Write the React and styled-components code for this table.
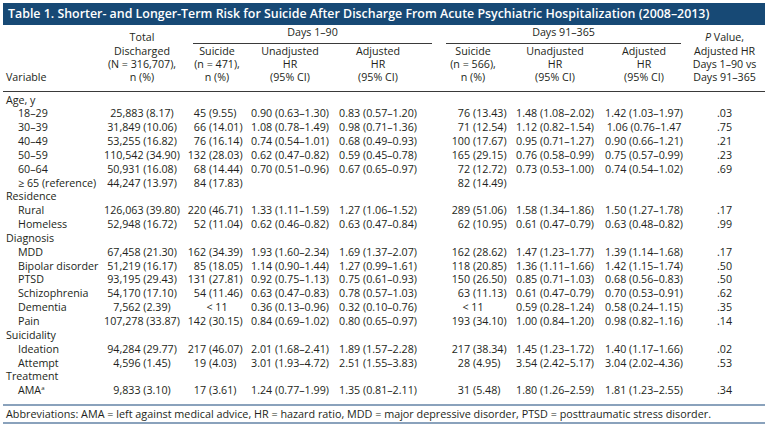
import React from 'react';
import styled, { createGlobalStyle } from 'styled-components';

const GlobalStyle = createGlobalStyle`
  * { box-sizing: border-box; }
  body {
    margin: 0;
    background: #fff;
  }
`;

const Page = styled.div`
  width: 768px;
  height: 425px;
  padding: 3px 3px 0;
  overflow: hidden;
  font-family: "Open Sans", "Noto Sans", sans-serif;
  color: #231f20;
`;

const TitleBar = styled.div`
  height: 22px;
  line-height: 22px;
  padding-left: 5px;
  background: #174975;
  color: #fff;
  font-size: 12.4px;
  font-weight: 600;
  white-space: nowrap;
`;

const Table = styled.table`
  width: 100%;
  table-layout: fixed;
  border-collapse: collapse;
  font-size: 10.7px;
`;

const Head = styled.thead`
  border-bottom: 1px solid #3a3a3a;
`;

const GroupRow = styled.tr`
  height: 19px;
`;

const LabelRow = styled.tr`
  height: 47px;
`;

const Th = styled.th`
  padding: 0 0 6px;
  font-weight: 400;
  line-height: 13.3px;
  text-align: ${(p) => (p.$left ? 'left' : 'center')};
  padding-left: ${(p) => (p.$left ? '3px' : '0')};
  vertical-align: bottom;
  white-space: nowrap;
`;

const GroupTh = styled.th`
  padding: 1px 0 0;
  font-weight: 400;
  vertical-align: top;
`;

const GroupLabel = styled.div`
  margin: ${(p) => p.$margin};
  padding-bottom: 5px;
  line-height: 12px;
  border-bottom: 1px solid #3a3a3a;
  text-align: center;
`;

const Body = styled.tbody`
  &::before {
    content: '';
    display: block;
    height: 2px;
  }
`;

const Row = styled.tr`
  height: 13.85px;
`;

const Td = styled.td`
  padding: 0;
  line-height: 13.85px;
  white-space: nowrap;
  text-align: center;
`;

const LabelTd = styled(Td)`
  text-align: left;
  padding-left: ${(p) => (p.$sub ? '15px' : '3px')};
`;

const Split = styled.span`
  display: flex;
`;

const Num = styled.span`
  flex: none;
  width: ${(p) => p.$w}px;
  text-align: right;
`;

const Pct = styled.span`
  flex: none;
  padding-left: 3px;
  text-align: left;
`;

const Footer = styled.div`
  margin-top: 6px;
  padding-left: 3px;
  border-top: 2px solid #8aa2bc;
  border-bottom: 2px solid #8aa2bc;
  font-size: 10.8px;
  line-height: 16px;
  white-space: nowrap;
`;

const Sup = styled.sup`
  font-size: 6px;
  vertical-align: 4px;
  line-height: 0;
`;

const Italic = styled.i`
  font-style: italic;
`;

const rows = [
  { cat: 'Age, y' },
  ['18–29', '25,883 (8.17)', '45 (9.55)', '0.90 (0.63–1.30)', '0.83 (0.57–1.20)', '76 (13.43)', '1.48 (1.08–2.02)', '1.42 (1.03–1.97)', '.03'],
  ['30–39', '31,849 (10.06)', '66 (14.01)', '1.08 (0.78–1.49)', '0.98 (0.71–1.36)', '71 (12.54)', '1.12 (0.82–1.54)', '1.06 (0.76–1.47', '.75'],
  ['40–49', '53,255 (16.82)', '76 (16.14)', '0.74 (0.54–1.01)', '0.68 (0.49–0.93)', '100 (17.67)', '0.95 (0.71–1.27)', '0.90 (0.66–1.21)', '.21'],
  ['50–59', '110,542 (34.90)', '132 (28.03)', '0.62 (0.47–0.82)', '0.59 (0.45–0.78)', '165 (29.15)', '0.76 (0.58–0.99)', '0.75 (0.57–0.99)', '.23'],
  ['60–64', '50,931 (16.08)', '68 (14.44)', '0.70 (0.51–0.96)', '0.67 (0.65–0.97)', '72 (12.72)', '0.73 (0.53–1.00)', '0.74 (0.54–1.02)', '.69'],
  ['≥ 65 (reference)', '44,247 (13.97)', '84 (17.83)', '', '', '82 (14.49)', '', '', ''],
  { cat: 'Residence' },
  ['Rural', '126,063 (39.80)', '220 (46.71)', '1.33 (1.11–1.59)', '1.27 (1.06–1.52)', '289 (51.06)', '1.58 (1.34–1.86)', '1.50 (1.27–1.78)', '.17'],
  ['Homeless', '52,948 (16.72)', '52 (11.04)', '0.62 (0.46–0.82)', '0.63 (0.47–0.84)', '62 (10.95)', '0.61 (0.47–0.79)', '0.63 (0.48–0.82)', '.99'],
  { cat: 'Diagnosis' },
  ['MDD', '67,458 (21.30)', '162 (34.39)', '1.93 (1.60–2.34)', '1.69 (1.37–2.07)', '162 (28.62)', '1.47 (1.23–1.77)', '1.39 (1.14–1.68)', '.17'],
  ['Bipolar disorder', '51,219 (16.17)', '85 (18.05)', '1.14 (0.90–1.44)', '1.27 (0.99–1.61)', '118 (20.85)', '1.36 (1.11–1.66)', '1.42 (1.15–1.74)', '.50'],
  ['PTSD', '93,195 (29.43)', '131 (27.81)', '0.92 (0.75–1.13)', '0.75 (0.61–0.93)', '150 (26.50)', '0.85 (0.71–1.03)', '0.68 (0.56–0.83)', '.50'],
  ['Schizophrenia', '54,170 (17.10)', '54 (11.46)', '0.63 (0.47–0.83)', '0.78 (0.57–1.03)', '63 (11.13)', '0.61 (0.47–0.79)', '0.70 (0.53–0.91)', '.62'],
  ['Dementia', '7,562 (2.39)', '< 11', '0.36 (0.13–0.96)', '0.32 (0.10–0.76)', '< 11', '0.59 (0.28–1.24)', '0.58 (0.24–1.15)', '.35'],
  ['Pain', '107,278 (33.87)', '142 (30.15)', '0.84 (0.69–1.02)', '0.80 (0.65–0.97)', '193 (34.10)', '1.00 (0.84–1.20)', '0.98 (0.82–1.16)', '.14'],
  { cat: 'Suicidality' },
  ['Ideation', '94,284 (29.77)', '217 (46.07)', '2.01 (1.68–2.41)', '1.89 (1.57–2.28)', '217 (38.34)', '1.45 (1.23–1.72)', '1.40 (1.17–1.66)', '.02'],
  ['Attempt', '4,596 (1.45)', '19 (4.03)', '3.01 (1.93–4.72)', '2.51 (1.55–3.83)', '28 (4.95)', '3.54 (2.42–5.17)', '3.04 (2.02–4.36)', '.53'],
  { cat: 'Treatment' },
  [<>AMA<Sup>a</Sup></>, '9,833 (3.10)', '17 (3.61)', '1.24 (0.77–1.99)', '1.35 (0.81–2.11)', '31 (5.48)', '1.80 (1.26–2.59)', '1.81 (1.23–2.55)', '.34'],
];

// column widths, left to right; the 6th is the gap between the two day groups
const widths = [97, 84, 66, 80, 96, 14, 66, 98, 80, 81];

function Count({ value, w }) {
  if (!value.includes(' (')) return value;
  const [n, rest] = value.split(' (');
  return (
    <Split>
      <Num $w={w}>{n}</Num>
      <Pct>({rest}</Pct>
    </Split>
  );
}

function DataRow({ cells }) {
  const [label, total, s1, u1, a1, s2, u2, a2, p] = cells;
  return (
    <Row>
      <LabelTd $sub>{label}</LabelTd>
      <Td>{total}</Td>
      <Td><Count value={s1} w={22} /></Td>
      <Td>{u1}</Td>
      <Td>{a1}</Td>
      <Td />
      <Td><Count value={s2} w={30} /></Td>
      <Td>{u2}</Td>
      <Td>{a2}</Td>
      <Td>{p}</Td>
    </Row>
  );
}

export default function App() {
  return (
    <Page>
      <GlobalStyle />
      <TitleBar>
        Table 1. Shorter- and Longer-Term Risk for Suicide After Discharge From Acute Psychiatric Hospitalization (2008–2013)
      </TitleBar>
      <Table>
        <colgroup>
          {widths.map((w, i) => (
            <col key={i} style={{ width: w }} />
          ))}
        </colgroup>
        <Head>
          <GroupRow>
            <Th rowSpan={2} $left>Variable</Th>
            <Th rowSpan={2}>
              Total
              <br />
              Discharged
              <br />
              (N = 316,707),
              <br />
              n (%)
            </Th>
            <GroupTh colSpan={4}>
              <GroupLabel $margin="0 8px 0 9px">Days 1–90</GroupLabel>
            </GroupTh>
            <GroupTh colSpan={3}>
              <GroupLabel $margin="0 3px 0 6px">Days 91–365</GroupLabel>
            </GroupTh>
            <Th rowSpan={2}>
              <Italic>P</Italic> Value,
              <br />
              Adjusted HR
              <br />
              Days 1–90 vs
              <br />
              Days 91–365
            </Th>
          </GroupRow>
          <LabelRow>
            <Th>
              Suicide
              <br />
              (n = 471),
              <br />
              n (%)
            </Th>
            <Th>
              Unadjusted
              <br />
              HR
              <br />
              (95% CI)
            </Th>
            <Th>
              Adjusted
              <br />
              HR
              <br />
              (95% CI)
            </Th>
            <Th />
            <Th>
              Suicide
              <br />
              (n = 566),
              <br />
              n (%)
            </Th>
            <Th>
              Unadjusted
              <br />
              HR
              <br />
              (95% CI)
            </Th>
            <Th>
              Adjusted
              <br />
              HR
              <br />
              (95% CI)
            </Th>
          </LabelRow>
        </Head>
        <Body>
          {rows.map((r, i) =>
            r.cat ? (
              <Row key={i}>
                <LabelTd colSpan={10}>{r.cat}</LabelTd>
              </Row>
            ) : (
              <DataRow key={i} cells={r} />
            )
          )}
        </Body>
      </Table>
      <Footer>
        Abbreviations: AMA = left against medical advice, HR = hazard ratio, MDD = major depressive disorder, PTSD = posttraumatic stress disorder.
      </Footer>
    </Page>
  );
}
